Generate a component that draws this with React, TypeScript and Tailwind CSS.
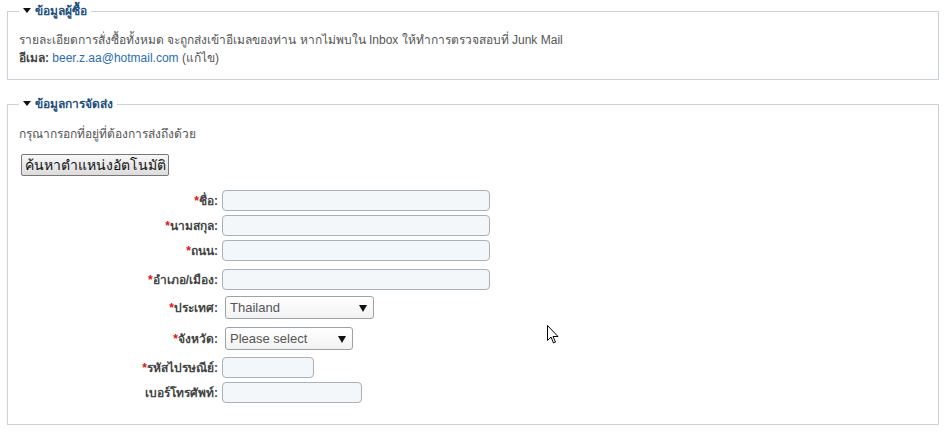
import React from "react";

const Tri = () => (
  <svg width="8" height="5" viewBox="0 0 8 5" className="inline-block mr-[4px] mb-[2px]">
    <path d="M0 0 L8 0 L4 5 Z" fill="#111" />
  </svg>
);

function Legend({ children }: { children: React.ReactNode }) {
  return (
    <legend className="px-[4px] text-[12px] font-bold text-[#1d4f7c] leading-[16px]">
      <Tri />
      {children}
    </legend>
  );
}

function Label({ text, req = true }: { text: string; req?: boolean }) {
  return (
    <div className="w-[202px] text-right text-[12px] font-bold text-[#444] pr-[3px] leading-[16px]">
      {req && <span className="text-[#e01010]">*</span>}
      {text}
    </div>
  );
}

function Input({ w }: { w: number }) {
  return (
    <div
      className="h-[21px] rounded-[4px] border border-[#a7b1b9] bg-[#f4f7f9] ml-[1px]"
      style={{ width: w }}
    />
  );
}

function Select({ w, value }: { w: number; value: string }) {
  return (
    <div
      className="ml-[4px] h-[23px] rounded-[3px] border border-[#9aa3aa] bg-gradient-to-b from-[#ffffff] to-[#f2f2f2] flex items-center justify-between pl-[4px] pr-[6px]"
      style={{ width: w }}
    >
      <span className="text-[13px] text-[#555] font-['Liberation_Sans',sans-serif]">{value}</span>
      <svg width="8" height="8" viewBox="0 0 8 8">
        <path d="M0 1 L8 1 L4 8 Z" fill="#111" />
      </svg>
    </div>
  );
}

export default function App() {
  return (
    <div className="relative w-[948px] h-[432px] bg-white font-['Liberation_Sans','DejaVu_Sans',sans-serif] text-[#555] pl-[7px] pr-[9px]">
      <fieldset className="mt-[3px] border border-[#c9d1d9] pl-[11px] pb-[12px] pt-[12px]">
        <Legend>ข้อมูลผู้ซื้อ</Legend>
        <div className="text-[12px] leading-[18px]">
          รายละเอียดการสั่งซื้อทั้งหมด จะถูกส่งเข้าอีเมลของท่าน หากไม่พบใน Inbox ให้ทำการตรวจสอบที่ Junk Mail
        </div>
        <div className="text-[12px] leading-[18px]">
          <span className="font-bold text-[#444]">อีเมล:</span>{" "}
          <span className="text-[#2a6db5]">beer.z.aa@hotmail.com</span> (แก้ไข)
        </div>
      </fieldset>

      <fieldset className="mt-[16px] border border-[#c9d1d9] pl-[11px] pb-[21px] pt-[13px]">
        <Legend>ข้อมูลการจัดส่ง</Legend>
        <div className="text-[12px] leading-[18px]">กรุณากรอกที่อยู่ที่ต้องการส่งถึงด้วย</div>
        <button className="mt-[11px] ml-[2px] h-[22px] w-[148px] border border-[#777] rounded-[2px] bg-gradient-to-b from-[#f7f7f7] to-[#dcdcdc] text-[14px] text-[#111] leading-[18px]">
          ค้นหาตำแหน่งอัตโนมัติ
        </button>

        <div className="mt-[13px] flex items-center">
          <Label text="ชื่อ:" />
          <Input w={268} />
        </div>
        <div className="mt-[4px] flex items-center">
          <Label text="นามสกุล:" />
          <Input w={268} />
        </div>
        <div className="mt-[4px] flex items-center">
          <Label text="ถนน:" />
          <Input w={268} />
        </div>
        <div className="mt-[8px] flex items-center">
          <Label text="อำเภอ/เมือง:" />
          <Input w={268} />
        </div>
        <div className="mt-[6px] flex items-center">
          <Label text="ประเทศ:" />
          <Select w={149} value="Thailand" />
        </div>
        <div className="mt-[8px] flex items-center">
          <Label text="จังหวัด:" />
          <Select w={128} value="Please select" />
        </div>
        <div className="mt-[7px] flex items-center">
          <Label text="รหัสไปรษณีย์:" />
          <Input w={92} />
        </div>
        <div className="mt-[4px] flex items-center">
          <Label text="เบอร์โทรศัพท์:" req={false} />
          <Input w={140} />
        </div>
      </fieldset>

      <svg
        className="absolute left-[547px] top-[322px]"
        width="12"
        height="20"
        viewBox="0 0 12 20"
      >
        <path
          d="M0.5 0.5 L0.5 15.5 L4 12 L6.5 18 L8.5 17 L6 11.5 L11 11.5 Z"
          fill="#fff"
          stroke="#000"
          strokeWidth="1"
          strokeLinejoin="round"
        />
      </svg>
    </div>
  );
}
